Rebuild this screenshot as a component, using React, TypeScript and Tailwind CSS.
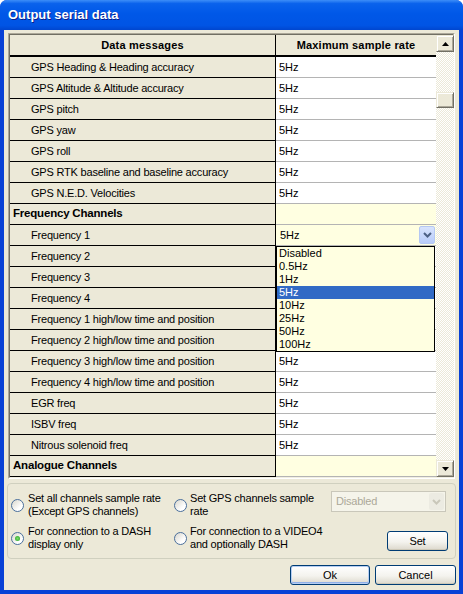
import React from 'react';

type Row = { label: string; v?: string; cat?: boolean; combo?: boolean };

const rows: Row[] = [
  { label: 'GPS Heading & Heading accuracy', v: '5Hz' },
  { label: 'GPS Altitude & Altitude accuracy', v: '5Hz' },
  { label: 'GPS pitch', v: '5Hz' },
  { label: 'GPS yaw', v: '5Hz' },
  { label: 'GPS roll', v: '5Hz' },
  { label: 'GPS RTK baseline and baseline accuracy', v: '5Hz' },
  { label: 'GPS N.E.D. Velocities', v: '5Hz' },
  { label: 'Frequency Channels', cat: true },
  { label: 'Frequency 1', combo: true },
  { label: 'Frequency 2' },
  { label: 'Frequency 3' },
  { label: 'Frequency 4' },
  { label: 'Frequency 1 high/low time and position' },
  { label: 'Frequency 2 high/low time and position' },
  { label: 'Frequency 3 high/low time and position', v: '5Hz' },
  { label: 'Frequency 4 high/low time and position', v: '5Hz' },
  { label: 'EGR freq', v: '5Hz' },
  { label: 'ISBV freq', v: '5Hz' },
  { label: 'Nitrous solenoid freq', v: '5Hz' },
  { label: 'Analogue Channels', cat: true },
];

const options = ['Disabled', '0.5Hz', '1Hz', '5Hz', '10Hz', '25Hz', '50Hz', '100Hz'];

function Chevron({ color }: { color: string }) {
  return (
    <svg width="9" height="6" viewBox="0 0 9 6">
      <path d="M1 1 L4.5 4.5 L8 1" fill="none" stroke={color} strokeWidth="2" />
    </svg>
  );
}

function Radio({ checked }: { checked?: boolean }) {
  return (
    <span className="flex h-[13px] w-[13px] shrink-0 items-center justify-center rounded-full border border-[#4A6F9C] bg-[linear-gradient(135deg,#D8D6CC,#FFFFFF_70%)]">
      {checked && <span className="h-[5px] w-[5px] rounded-full bg-[radial-gradient(circle,#7CDB6A,#21A121)]" />}
    </span>
  );
}

function ScrollBtn({ up }: { up?: boolean }) {
  return (
    <div className="flex h-[17px] w-[18px] shrink-0 items-center justify-center border border-t-[#ECE9D8] border-l-[#ECE9D8] border-r-[#716F64] border-b-[#716F64] bg-[#ECE9D8] shadow-[inset_1px_1px_#FFFFFF,inset_-1px_-1px_#ACA899]">
      <svg width="7" height="4" viewBox="0 0 7 4">
        {up ? <path d="M3.5 0 L7 4 L0 4 Z" fill="#000" /> : <path d="M0 0 L7 0 L3.5 4 Z" fill="#000" />}
      </svg>
    </div>
  );
}

function XPButton({ label, def, w }: { label: string; def?: boolean; w: string }) {
  return (
    <div
      className={`flex h-[20px] ${w} items-center justify-center rounded-[3px] border border-[#003C74] bg-[linear-gradient(180deg,#FFFFFF,#F4F3EE_55%,#DCD8CC)] text-[11px] text-black ${
        def ? 'shadow-[inset_0_0_0_1px_#B6CEF2,inset_0_-1px_0_1px_#90B0E8]' : 'shadow-[inset_0_-1px_0_0_#CDC8B8]'
      }`}
    >
      {label}
    </div>
  );
}

export default function App() {
  return (
    <div className="flex h-[594px] w-[463px] flex-col overflow-hidden rounded-t-[7px] bg-[#0841D6] font-['Liberation_Sans',Arial,sans-serif] text-[11px] text-black">
      {/* Title bar */}
      <div className="flex h-[30px] shrink-0 items-center bg-[linear-gradient(180deg,#3D8EF8_0%,#0A62EC_12%,#0058E8_45%,#0054E4_85%,#0046CF_100%)] pl-[8px]">
        <span className="text-[13px] font-bold text-white [text-shadow:1px_1px_#0A1E8C]">Output serial data</span>
      </div>

      {/* Client */}
      <div className="mx-[4px] mb-[4px] flex flex-1 flex-col bg-[#ECE9D8]">
        {/* Grid */}
        <div className="ml-[4px] mr-[4px] mt-[3px] border border-t-[#ACA899] border-l-[#ACA899] border-r-white border-b-white">
          <div className="flex border border-t-[#716F64] border-l-[#716F64] border-r-[#F1EFE2] border-b-[#F1EFE2]">
            <div className="relative w-[426px]">
              {/* Header */}
              <div className="flex h-[22px] border-b-2 border-black bg-[#ECE9D8] font-bold tracking-[0.2px]">
                <div className="flex w-[266px] items-center justify-center border-r border-black">Data messages</div>
                <div className="flex w-[160px] items-center justify-center">Maximum sample rate</div>
              </div>
              {rows.map((r, i) => (
                <div key={i} className="flex h-[21px]">
                  <div
                    className={`flex w-[266px] items-center border-r border-b border-black bg-[#ECE9D8] tracking-[-0.2px] ${
                      r.cat ? 'pl-[3px] text-[11.5px] font-bold' : 'pl-[21px]'
                    }`}
                  >
                    {r.label}
                  </div>
                  {r.combo ? (
                    <div className="flex w-[160px] items-center border-b border-[#B4B4B4] bg-[#FFFFE1] pl-[4px] pr-[1px]">
                      <span className="flex-1">5Hz</span>
                      <div className="flex h-[18px] w-[16px] items-center justify-center rounded-[2px] border border-[#B5C8F3] bg-[linear-gradient(180deg,#D8E4FD,#B8CCFA)]">
                        <Chevron color="#4D6185" />
                      </div>
                    </div>
                  ) : (
                    <div
                      className={`flex w-[160px] items-center border-b border-[#B4B4B4] pl-[3px] ${
                        r.cat ? 'bg-[#FFFFE1]' : 'bg-white'
                      }`}
                    >
                      {r.v}
                    </div>
                  )}
                </div>
              ))}
              {/* Dropdown list */}
              <div className="absolute left-[266px] top-[211px] w-[159px] border border-black bg-[#FFFFE1] text-[11px]">
                {options.map((o) => (
                  <div
                    key={o}
                    className={`h-[13px] pl-[2px] leading-[13px] ${o === '5Hz' ? 'bg-[#316AC5] text-white' : ''}`}
                  >
                    {o}
                  </div>
                ))}
              </div>
            </div>
            {/* Scrollbar */}
            <div className="flex w-[18px] flex-col bg-[image:repeating-conic-gradient(#FFFFFF_0%_25%,#ECE9D8_0%_50%)] bg-[length:2px_2px]">
              <ScrollBtn up />
              <div className="mt-[40px] h-[16px] w-[18px] border border-t-[#ECE9D8] border-l-[#ECE9D8] border-r-[#716F64] border-b-[#716F64] bg-[#ECE9D8] shadow-[inset_1px_1px_#FFFFFF,inset_-1px_-1px_#ACA899]" />
              <div className="flex-1" />
              <ScrollBtn />
            </div>
          </div>
        </div>

        {/* Group box */}
        <div className="mx-[3px] mt-[4px] h-[76px] rounded-[4px] border border-[#D0D0BF] pl-[3px] pt-[8px] tracking-[-0.2px]">
          <div className="flex h-[26px]">
            <div className="flex w-[163px] items-center gap-[4px]">
              <Radio />
              <div className="leading-[13px]">
                Set all channels sample rate
                <br />
                (Except GPS channels)
              </div>
            </div>
            <div className="flex w-[157px] items-center gap-[3px]">
              <Radio />
              <div className="leading-[13px]">
                Set GPS channels sample
                <br />
                rate
              </div>
            </div>
            <div className="-mt-[1px] flex h-[21px] w-[115px] items-center border border-[#C9C7BA] bg-[#F5F4EA] pl-[4px] pr-[1px] text-[#ACA899]">
              <span className="flex-1">Disabled</span>
              <div className="flex h-[17px] w-[15px] items-center justify-center rounded-[2px] bg-[#ECEBE2]">
                <Chevron color="#C9C7BA" />
              </div>
            </div>
          </div>
          <div className="mt-[7px] flex h-[26px]">
            <div className="flex w-[163px] items-center gap-[4px]">
              <Radio checked />
              <div className="leading-[13px]">
                For connection to a DASH
                <br />
                display only
              </div>
            </div>
            <div className="flex w-[157px] items-center gap-[3px]">
              <Radio />
              <div className="leading-[13px]">
                For connection to a VIDEO4
                <br />
                and optionally DASH
              </div>
            </div>
            <div className="flex flex-1 items-end justify-end pr-[7px]">
              <XPButton label="Set" w="w-[61px]" />
            </div>
          </div>
        </div>

        {/* Buttons */}
        <div className="mt-[6px] flex justify-end gap-[5px] pr-[3px]">
          <XPButton label="Ok" def w="w-[80px]" />
          <XPButton label="Cancel" w="w-[81px]" />
        </div>
      </div>
    </div>
  );
}
